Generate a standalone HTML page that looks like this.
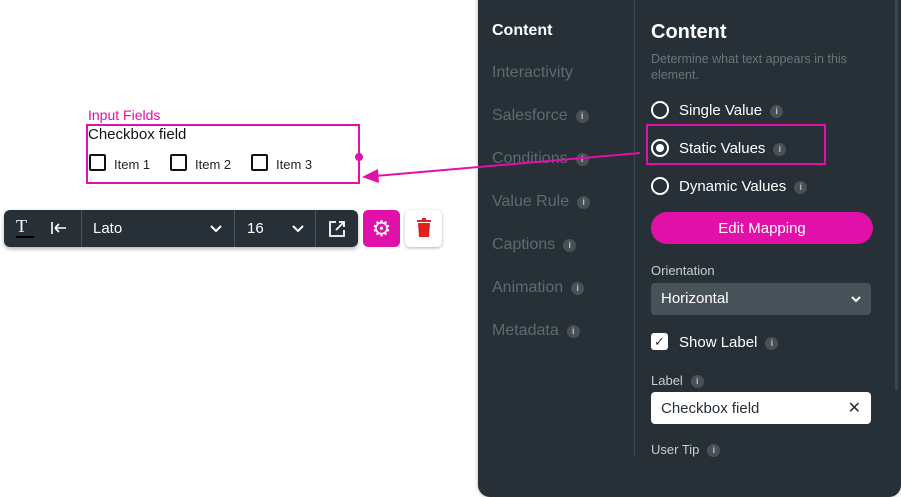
<!DOCTYPE html>
<html><head><style>
*{margin:0;padding:0;box-sizing:border-box}
body{width:901px;height:497px;background:#fff;position:relative;overflow:hidden;font-family:"Liberation Sans",sans-serif}
.a{position:absolute;white-space:nowrap}
.panel{position:absolute;left:478px;top:-10px;width:423px;height:507px;background:#263036;border-radius:0 0 12px 12px;box-shadow:0 0 4px rgba(0,0,0,.3)}
.nav{color:#5f6a70;font-size:16px}
.i{display:inline-block;width:13px;height:13px;border-radius:50%;background:#485157;color:#b8bfc3;font-size:9px;text-align:center;line-height:13px;font-weight:bold;vertical-align:1px;margin-left:8px}
.w{color:#fff;font-size:15px}
.radio{position:absolute;width:18px;height:18px;border:2px solid #fff;border-radius:50%}
.cb{position:absolute;width:17px;height:17px;border:2px solid #111;border-radius:2px}
</style></head><body>
<div class="panel"></div>
<div class="a" style="left:634px;top:0;width:1px;height:456px;background:#3c474d"></div>
<div class="a" style="left:895px;top:0;width:3px;height:390px;background:#3a454b"></div>
<div class="a" style="left:492px;top:22px;color:#fff;font-weight:bold;font-size:16px">Content</div>
<div class="a nav" style="left:492px;top:64px">Interactivity</div>
<div class="a nav" style="left:492px;top:107px">Salesforce<span class="i">i</span></div>
<div class="a nav" style="left:492px;top:150px">Conditions<span class="i">i</span></div>
<div class="a nav" style="left:492px;top:193px">Value Rule<span class="i">i</span></div>
<div class="a nav" style="left:492px;top:236px">Captions<span class="i">i</span></div>
<div class="a nav" style="left:492px;top:279px">Animation<span class="i">i</span></div>
<div class="a nav" style="left:492px;top:322px">Metadata<span class="i">i</span></div>
<div class="a" style="left:651px;top:21px;color:#fff;font-weight:bold;font-size:20px">Content</div>
<div class="a" style="left:651px;top:51px;color:#6b767c;font-size:12.5px;line-height:16px">Determine what text appears in this<br>element.</div>
<div class="radio" style="left:651px;top:101px"></div>
<div class="a w" style="left:679px;top:102px">Single Value<span class="i">i</span></div>
<div class="radio" style="left:651px;top:139px"><div style="position:absolute;left:3px;top:3px;width:8px;height:8px;border-radius:50%;background:#fff"></div></div>
<div class="a w" style="left:679px;top:140px">Static Values<span class="i">i</span></div>
<div class="a" style="left:646px;top:124px;width:180px;height:41px;border:2px solid #e010a8"></div>
<div class="radio" style="left:651px;top:177px"></div>
<div class="a w" style="left:679px;top:178px">Dynamic Values<span class="i">i</span></div>
<div class="a" style="left:651px;top:212px;width:222px;height:32px;border-radius:16px;background:#e010a8;color:#fff;font-size:15px;text-align:center;line-height:34px">Edit Mapping</div>
<div class="a" style="left:651px;top:263px;color:#c8ced1;font-size:13px">Orientation</div>
<div class="a" style="left:651px;top:283px;width:220px;height:32px;border-radius:4px;background:#485359;color:#fff;font-size:15px;line-height:32px;padding-left:10px">Horizontal<svg style="position:absolute;right:10px;top:13px" width="10" height="7"><path d="M1 1l4 4 4-4" stroke="#fff" stroke-width="2" fill="none"/></svg></div>
<div class="a" style="left:651px;top:333px;width:17px;height:17px;border-radius:3px;background:#fff;color:#263036;font-size:13px;text-align:center;line-height:17px">&#10003;</div>
<div class="a w" style="left:679px;top:334px">Show Label<span class="i">i</span></div>
<div class="a" style="left:651px;top:373px;color:#c8ced1;font-size:13px">Label<span class="i">i</span></div>
<div class="a" style="left:651px;top:392px;width:220px;height:32px;border-radius:4px;background:#fff;color:#263036;font-size:15px;line-height:33px;padding-left:10px">Checkbox field<span style="position:absolute;right:10px;top:0;font-size:16px">&#10005;</span></div>
<div class="a" style="left:651px;top:442px;color:#c8ced1;font-size:13px">User Tip<span class="i">i</span></div>

<div class="a" style="left:88px;top:107px;color:#e010a8;font-size:14px">Input Fields</div>
<div class="a" style="left:86px;top:124px;width:274px;height:60px;border:2px solid #e010a8"></div>
<div class="a" style="left:355px;top:153px;width:8px;height:8px;border-radius:50%;background:#e010a8"></div>
<div class="a" style="left:88px;top:126px;color:#111;font-size:15px">Checkbox field</div>
<div class="cb" style="left:89px;top:154px"></div><div class="a" style="left:114px;top:157px;font-size:13px;color:#222">Item 1</div>
<div class="cb" style="left:170px;top:154px"></div><div class="a" style="left:195px;top:157px;font-size:13px;color:#222">Item 2</div>
<div class="cb" style="left:251px;top:154px"></div><div class="a" style="left:276px;top:157px;font-size:13px;color:#222">Item 3</div>
<svg class="a" style="left:0;top:0" width="901" height="497"><line x1="640" y1="153" x2="375" y2="176" stroke="#e010a8" stroke-width="2"/><polygon points="362,177 378,169 379,183" fill="#e010a8"/></svg>

<div class="a" style="left:4px;top:210px;width:354px;height:37px;border-radius:6px;background:#263036;box-shadow:0 2px 4px rgba(0,0,0,.3)"></div>
<div class="a" style="left:16px;top:216px;color:#fff;font-size:18px;font-family:'Liberation Serif',serif">T</div>
<div class="a" style="left:16px;top:236px;width:18px;height:2px;background:#000"></div>
<svg class="a" style="left:51px;top:221px" width="16" height="14"><path d="M1 1v12M4 7h11M4 7l4-4M4 7l4 4" stroke="#fff" stroke-width="1.6" fill="none"/></svg>
<div class="a" style="left:81px;top:210px;width:1px;height:37px;background:#4a555b"></div>
<div class="a" style="left:93px;top:220px;color:#fff;font-size:15px">Lato</div>
<svg class="a" style="left:210px;top:225px" width="12" height="8"><path d="M1 1l5 5 5-5" stroke="#fff" stroke-width="2" fill="none"/></svg>
<div class="a" style="left:234px;top:210px;width:1px;height:37px;background:#4a555b"></div>
<div class="a" style="left:247px;top:220px;color:#fff;font-size:15px">16</div>
<svg class="a" style="left:292px;top:225px" width="12" height="8"><path d="M1 1l5 5 5-5" stroke="#fff" stroke-width="2" fill="none"/></svg>
<div class="a" style="left:315px;top:210px;width:1px;height:37px;background:#4a555b"></div>
<svg class="a" style="left:328px;top:220px" width="18" height="18"><path d="M8 2H2v14h14v-6M11 2h5v5M16 2l-8 8" stroke="#fff" stroke-width="1.8" fill="none"/></svg>
<div class="a" style="left:363px;top:210px;width:37px;height:37px;border-radius:5px;background:#e010a8;color:#fff;font-size:22px;text-align:center;line-height:37px">&#9881;</div>
<div class="a" style="left:405px;top:210px;width:37px;height:37px;border-radius:5px;background:#fff;box-shadow:0 1px 3px rgba(0,0,0,.3)"></div>
<svg class="a" style="left:416px;top:218px" width="16" height="20"><rect x="1" y="2" width="14" height="2" fill="#e0201c"/><rect x="6" y="0" width="4" height="2" fill="#e0201c"/><path d="M2 5h12l-1 14H3z" fill="#e0201c"/></svg>
</body></html>
